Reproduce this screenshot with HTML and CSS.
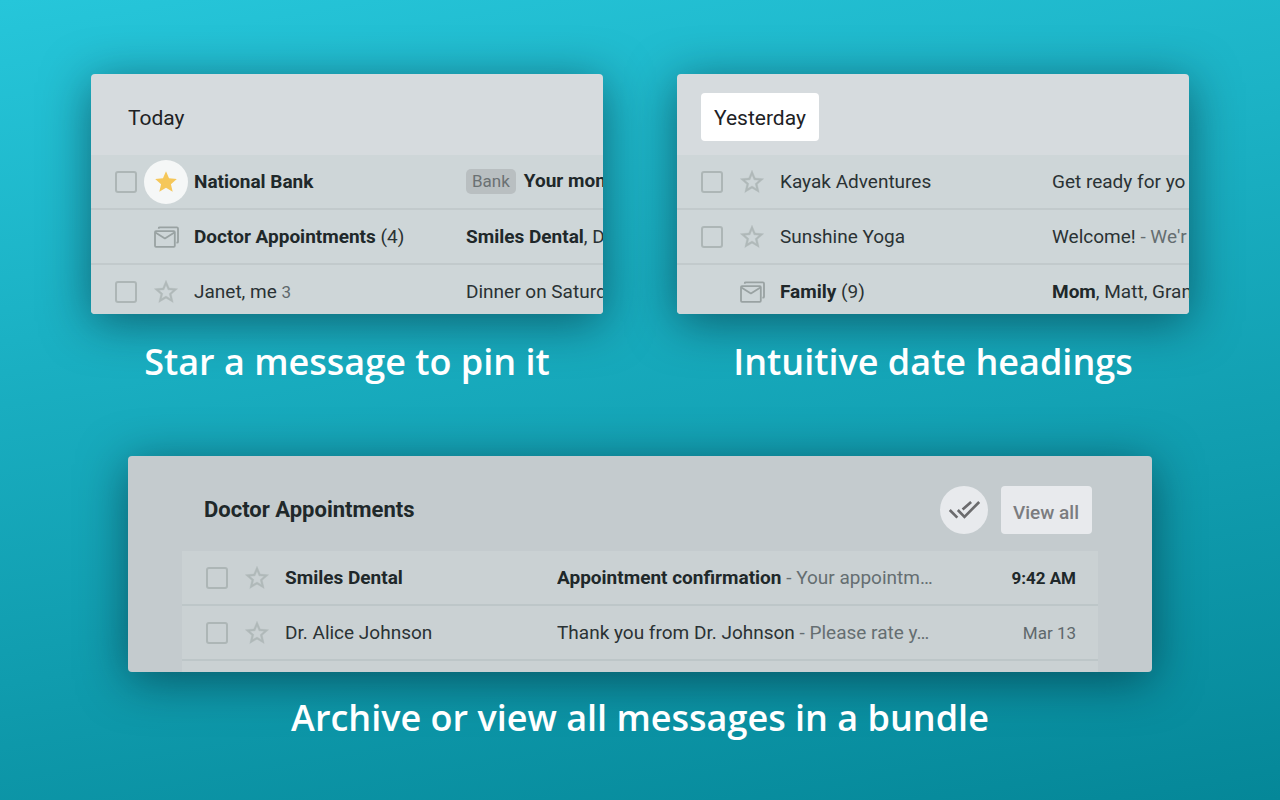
FILE: index.html
```
<!DOCTYPE html>
<html lang="en">
<head>
    <meta charset="UTF-8">
    <meta name="viewport" content="width=device-width, initial-scale=1.0">
    <title>Inbox Features</title>
    <link rel="stylesheet" href="styles.css">
</head>
<body>
    <svg class="icon-defs" aria-hidden="true">
        <symbol id="star-outline" viewBox="0 0 24 24">
            <path d="M22 9.24l-7.19-.62L12 2 9.19 8.63 2 9.24l5.46 4.73L5.82 21 12 17.27 18.18 21l-1.63-7.03L22 9.24zM12 15.4l-3.76 2.27 1-4.28-3.32-2.88 4.38-.38L12 6.1l1.71 4.04 4.38.38-3.32 2.88 1 4.28L12 15.4z"/>
        </symbol>
        <symbol id="star-filled" viewBox="0 0 24 24">
            <path d="M12 17.27L18.18 21l-1.64-7.03L22 9.24l-7.19-.61L12 2 9.19 8.63 2 9.24l5.46 4.73L5.82 21z"/>
        </symbol>
        <symbol id="bundle" viewBox="0 0 26 22">
            <g fill="none" stroke="currentColor" stroke-width="1.8" stroke-linejoin="round">
                <rect x="1" y="5.2" width="19.8" height="15.6" rx="1"/>
                <path d="M1.4 6.4l9.5 6 9.5-6"/>
                <path d="M4.8 2.8V2.2q0-.9 1-.9h17q1.2 0 1.2 1.2v13.2q0 1-1 1h-.6"/>
            </g>
        </symbol>
    </svg>

    <main class="container">
        <section class="feature">
            <div class="card">
                <div class="date-header">
                    <h3 class="date">Today</h3>
                </div>
                <table class="messages">
                    <colgroup>
                        <col class="col-check"><col class="col-star"><col class="col-sender"><col>
                    </colgroup>
                    <tbody>
                        <tr class="unread">
                            <td class="check"><input type="checkbox" aria-label="Select National Bank"></td>
                            <td><button class="star starred" aria-label="Starred"><svg><use href="#star-filled"/></svg></button></td>
                            <td>National Bank</td>
                            <td><span class="label">Bank</span>Your mon</td>
                        </tr>
                        <tr>
                            <td></td>
                            <td><svg class="bundle"><use href="#bundle"/></svg></td>
                            <td><b>Doctor Appointments</b> (4)</td>
                            <td><b>Smiles Dental</b>, D</td>
                        </tr>
                        <tr>
                            <td class="check"><input type="checkbox" aria-label="Select Janet, me"></td>
                            <td><button class="star" aria-label="Not starred"><svg><use href="#star-outline"/></svg></button></td>
                            <td>Janet, me <span class="count">3</span></td>
                            <td>Dinner on Saturd</td>
                        </tr>
                    </tbody>
                </table>
            </div>
            <h2>Star a message to pin it</h2>
        </section>

        <section class="feature">
            <div class="card">
                <div class="date-header">
                    <h3 class="date highlight">Yesterday</h3>
                </div>
                <table class="messages">
                    <colgroup>
                        <col class="col-check"><col class="col-star"><col class="col-sender"><col>
                    </colgroup>
                    <tbody>
                        <tr>
                            <td class="check"><input type="checkbox" aria-label="Select Kayak Adventures"></td>
                            <td><button class="star" aria-label="Not starred"><svg><use href="#star-outline"/></svg></button></td>
                            <td>Kayak Adventures</td>
                            <td>Get ready for yo</td>
                        </tr>
                        <tr>
                            <td class="check"><input type="checkbox" aria-label="Select Sunshine Yoga"></td>
                            <td><button class="star" aria-label="Not starred"><svg><use href="#star-outline"/></svg></button></td>
                            <td>Sunshine Yoga</td>
                            <td>Welcome! <span class="snippet">- We'r</span></td>
                        </tr>
                        <tr>
                            <td></td>
                            <td><svg class="bundle"><use href="#bundle"/></svg></td>
                            <td><b>Family</b> (9)</td>
                            <td><b>Mom</b>, Matt, Gran</td>
                        </tr>
                    </tbody>
                </table>
            </div>
            <h2>Intuitive date headings</h2>
        </section>

        <section class="feature wide">
            <div class="card bundle-card">
                <div class="bundle-header">
                    <h3>Doctor Appointments</h3>
                    <button class="archive" aria-label="Archive all">
                        <svg viewBox="0 0 34 20"><path d="M2 9.5l8 8M10.5 9.5l7 7.2L33 1M15.5 9L24.5 1"/></svg>
                    </button>
                    <button class="view-all">View all</button>
                </div>
                <table class="messages">
                    <colgroup>
                        <col class="col-check"><col class="col-star"><col class="col-sender"><col><col class="col-time">
                    </colgroup>
                    <tbody>
                        <tr class="unread">
                            <td class="check"><input type="checkbox" aria-label="Select Smiles Dental"></td>
                            <td><button class="star" aria-label="Not starred"><svg><use href="#star-outline"/></svg></button></td>
                            <td>Smiles Dental</td>
                            <td>Appointment confirmation <span class="snippet">- Your appointm…</span></td>
                            <td class="time">9:42 AM</td>
                        </tr>
                        <tr>
                            <td class="check"><input type="checkbox" aria-label="Select Dr. Alice Johnson"></td>
                            <td><button class="star" aria-label="Not starred"><svg><use href="#star-outline"/></svg></button></td>
                            <td>Dr. Alice Johnson</td>
                            <td>Thank you from Dr. Johnson <span class="snippet">- Please rate y…</span></td>
                            <td class="time">Mar 13</td>
                        </tr>
                        <tr>
                            <td colspan="5"></td>
                        </tr>
                    </tbody>
                </table>
            </div>
            <h2>Archive or view all messages in a bundle</h2>
        </section>
    </main>
</body>
</html>
```
FILE: styles.css
```
* {
    box-sizing: border-box;
}
body {
    font-family: Roboto, Arial, sans-serif;
    margin: 0;
    min-height: 100vh;
    color: #2a3234;
    background: linear-gradient(170deg, #26c6da, #058798);
}
.icon-defs {
    display: none;
}
.container {
    display: grid;
    grid-template-columns: 40% 40%;
    justify-content: center;
    column-gap: 74px;
    row-gap: 68px;
    padding-top: 74px;
}
.wide {
    grid-column: 1 / -1;
    justify-self: center;
    width: 80vw;
}
h2 {
    margin: 22px 0 0;
    font-family: "Open Sans", sans-serif;
    font-size: 36px;
    line-height: 52px;
    font-weight: 600;
    text-align: center;
    white-space: nowrap;
    color: white;
}
.wide h2 {
    margin-top: 20px;
}
.card {
    max-height: 240px;
    overflow: hidden;
    border-radius: 4px;
    background-color: #d6dbde;
    box-shadow: 0 8px 48px rgba(0, 20, 30, 0.5);
}
.date-header {
    display: flex;
    padding: 19px 24px 14px;
}
.date {
    margin: 0;
    padding: 2px 13px 0;
    border-radius: 4px;
    font-size: 21px;
    line-height: 46px;
    font-weight: 400;
    color: #202124;
}
.highlight {
    background-color: white;
}

/* message rows */
.messages {
    width: 100%;
    table-layout: fixed;
    border-collapse: separate;
    border-spacing: 0;
    background-color: #ced6d8;
    font-size: 19px;
}
.messages td {
    height: 55px;
    padding: 0;
    border-bottom: 2px solid #c2cacc;
    white-space: nowrap;
    overflow: hidden;
}
.messages .check {
    padding-left: 24px;
}
.col-check {
    width: 53px;
}
.col-star {
    width: 50px;
}
.col-sender {
    width: 272px;
}
.col-time {
    width: 130px;
}
.unread, b {
    font-weight: 700;
    color: #20282a;
}
.count {
    font-size: 17px;
    color: #5f686b;
}
.snippet {
    font-weight: 400;
    color: #656e71;
}
.label {
    display: inline-block;
    margin-right: 8px;
    padding: 0 6px;
    border-radius: 5px;
    background-color: #b9bfc1;
    font-size: 17px;
    line-height: 25px;
    font-weight: 400;
    color: #6b7173;
}
.messages .time {
    padding-right: 22px;
    font-size: 17px;
    text-align: right;
}
tr:not(.unread) .time {
    color: #5f686b;
}
input[type="checkbox"] {
    appearance: none;
    display: block;
    width: 22px;
    height: 22px;
    margin: 0;
    border: 2px solid #adb6b6;
    border-radius: 3px;
}
button {
    border: none;
    padding: 0;
    font-family: inherit;
    cursor: pointer;
}
.star {
    display: flex;
    align-items: center;
    justify-content: center;
    width: 44px;
    height: 44px;
    border-radius: 50%;
    background: none;
}
.star svg {
    width: 28px;
    height: 28px;
    fill: #b0b9b9;
    stroke: #b0b9b9;
    stroke-width: 0.3;
}
.star.starred {
    background-color: #f5f7f7;
}
.starred svg {
    width: 26px;
    height: 26px;
    fill: #f5c75a;
    stroke: none;
}
.bundle {
    display: block;
    width: 26px;
    height: 22px;
    margin-left: 10px;
    color: #99a2a2;
}

/* opened bundle */
.bundle-card {
    max-height: 216px;
    padding: 0 54px;
    background-color: #c4cbce;
}
.bundle-header {
    display: flex;
    align-items: center;
    padding: 30px 6px 17px 22px;
}
.bundle-header h3 {
    flex: 1;
    margin: 0;
    font-size: 22px;
    line-height: 28px;
    font-weight: 700;
    color: #20282a;
}
.bundle-card .messages {
    background-color: #cad1d3;
}
.bundle-card .messages td {
    border-color: #bdc6c8;
}
.archive {
    display: flex;
    align-items: center;
    justify-content: center;
    width: 48px;
    height: 48px;
    margin-right: 13px;
    border-radius: 50%;
    background-color: #e8eaed;
}
.archive svg {
    width: 34px;
    height: 20px;
    padding-top: 1px;
    fill: none;
    stroke: #6b6b6d;
    stroke-width: 2.8;
}
.view-all {
    height: 48px;
    padding: 4px 13px 0 12px;
    border-radius: 4px;
    background-color: #e8eaed;
    font-size: 19px;
    font-weight: 500;
    color: #7b7c7f;
}
```
